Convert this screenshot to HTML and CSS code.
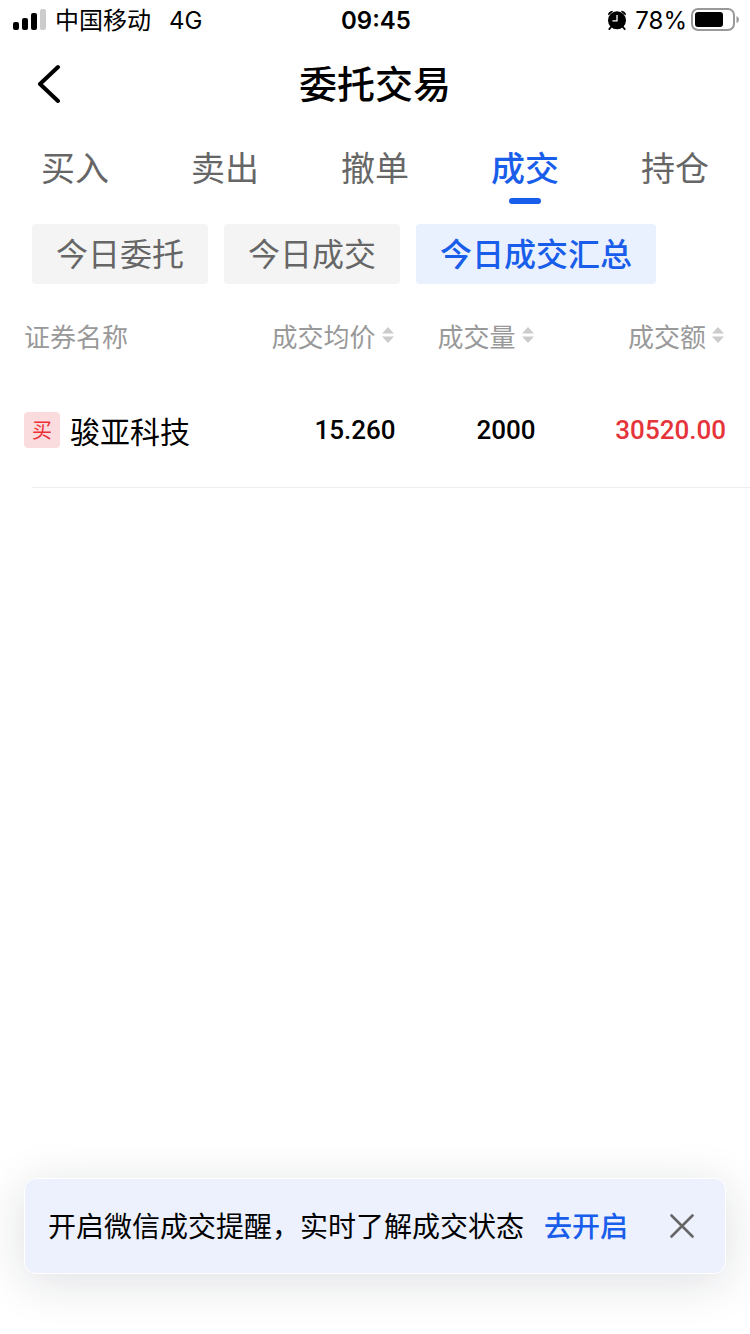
FILE: index.html
```html
<!DOCTYPE html>
<html lang="zh-CN">
<head>
  <meta charset="UTF-8">
  <meta name="viewport" content="width=device-width, initial-scale=1.0">
  <title>委托交易</title>
  <link rel="stylesheet" href="styles.css">
</head>
<body>

  <div class="status-bar">
    <div class="status-left">
      <svg class="signal" width="34" height="22" viewBox="0 0 34 22">
        <rect x="0" y="13" width="6" height="8" rx="2"/>
        <rect x="9" y="9" width="6" height="12" rx="2"/>
        <rect x="18" y="4" width="6" height="17" rx="2"/>
        <rect x="27" y="0" width="6" height="21" rx="2" fill="#ccc"/>
      </svg>
      <span class="carrier">中国移动</span>
      <span class="network">4G</span>
    </div>
    <div class="status-time">09:45</div>
    <div class="status-right">
      <svg class="alarm" width="20" height="20" viewBox="0 0 20 20">
        <circle cx="10" cy="10.3" r="9"/>
        <path d="M1 4.6 Q1.6 1.2 5.4 0.8 L6 1.6 L1.8 5.2 Z M19 4.6 Q18.4 1.2 14.6 0.8 L14 1.6 L18.2 5.2 Z"/>
        <path d="M4 17 L2.4 19M16 17 L17.6 19" fill="none" stroke="#000" stroke-width="2" stroke-linecap="round"/>
        <path d="M10 5 V10.8 H5.4" fill="none" stroke="#fff" stroke-width="1.3"/>
      </svg>
      <span>78%</span>
      <svg class="battery" width="48" height="24" viewBox="0 0 48 24">
        <rect x="1" y="1" width="42" height="21" rx="6" fill="none" stroke="#999" stroke-width="2"/>
        <rect x="4" y="4" width="28" height="15" rx="3"/>
        <path d="M45.5 8 Q48 9 48 11.5 Q48 14 45.5 15 Z" fill="#999"/>
      </svg>
    </div>
  </div>

  <header class="header">
    <button class="back" aria-label="返回">
      <svg width="24" height="40" viewBox="0 0 24 40">
        <path d="M22 3 L4 20 L22 37" fill="none" stroke="#000" stroke-width="4" stroke-linecap="round" stroke-linejoin="round"/>
      </svg>
    </button>
    <h1>委托交易</h1>
  </header>

  <nav class="tabs">
    <a href="#buy">买入</a>
    <a href="#sell">卖出</a>
    <a href="#cancel">撤单</a>
    <a href="#deal" class="active">成交</a>
    <a href="#hold">持仓</a>
  </nav>

  <div class="chips">
    <button>今日委托</button>
    <button>今日成交</button>
    <button class="active">今日成交汇总</button>
  </div>

  <table class="deals">
    <thead>
      <tr>
        <th class="name">证券名称</th>
        <th class="price"><button>成交均价<svg width="12" height="18" viewBox="0 0 12 18"><path d="M6 1 L12 7.5 H0 Z M0 10.5 H12 L6 17 Z"/></svg></button></th>
        <th class="volume"><button>成交量<svg width="12" height="18" viewBox="0 0 12 18"><path d="M6 1 L12 7.5 H0 Z M0 10.5 H12 L6 17 Z"/></svg></button></th>
        <th class="amount"><button>成交额<svg width="12" height="18" viewBox="0 0 12 18"><path d="M6 1 L12 7.5 H0 Z M0 10.5 H12 L6 17 Z"/></svg></button></th>
      </tr>
    </thead>
    <tbody>
      <tr>
        <td class="name"><div class="stock"><span class="badge">买</span>骏亚科技</div></td>
        <td>15.260</td>
        <td>2000</td>
        <td class="red">30520.00</td>
      </tr>
    </tbody>
  </table>
  <hr class="divider">

  <div class="notice">
    <p>开启微信成交提醒，实时了解成交状态</p>
    <a href="#open">去开启</a>
    <button class="close" aria-label="关闭">
      <svg width="24" height="24" viewBox="0 0 24 24">
        <path d="M1.5 1.5 L22.5 22.5 M22.5 1.5 L1.5 22.5" fill="none" stroke="#666" stroke-width="2.6" stroke-linecap="round"/>
      </svg>
    </button>
  </div>

</body>
</html>
```
FILE: styles.css
```css
* {
  box-sizing: border-box;
}
body {
  margin: 0;
  min-height: 100vh;
  display: flex;
  flex-direction: column;
  background: #fff;
  color: #000;
  font-family: "Noto Sans CJK SC", sans-serif;
}
button {
  border: none;
  padding: 0;
  background: none;
  color: inherit;
  font: inherit;
  cursor: pointer;
}
a {
  color: inherit;
  text-decoration: none;
}
svg {
  display: block;
  flex: none;
}

.status-bar {
  display: grid;
  grid-template-columns: 1fr auto 1fr;
  align-items: center;
  height: 40px;
  padding: 0 11px 0 13px;
  font-family: Inter, "Noto Sans CJK SC", sans-serif;
  font-size: 24px;
  line-height: 38px;
}
.status-bar span, .status-time {
  padding-top: 2px;
}
.status-left, .status-right {
  display: flex;
  align-items: center;
}
.status-right {
  justify-content: flex-end;
}
.carrier {
  margin-left: 8px;
}
.network {
  margin-left: 18px;
}
.status-time {
  font-weight: 600;
}
.alarm {
  margin-right: 8px;
}
.battery {
  margin-left: 4px;
}

.header {
  display: grid;
  grid-template-columns: 1fr auto 1fr;
  align-items: center;
  height: 88px;
  padding: 0 36px;
}
.header h1 {
  margin: 0;
  padding-bottom: 4px;
  font-size: 38px;
  font-weight: 500;
  line-height: 80px;
}
.back {
  justify-self: start;
}

.tabs {
  display: flex;
  height: 76px;
  color: #666;
  font-size: 34px;
  line-height: 78px;
}
.tabs a {
  flex: 1;
  position: relative;
  text-align: center;
}
.tabs .active {
  color: #195eeb;
  font-weight: 500;
}
.tabs .active::after {
  content: "";
  position: absolute;
  bottom: 0;
  left: 50%;
  width: 32px;
  height: 6px;
  margin-left: -16px;
  border-radius: 3px;
  background: #195eeb;
}

.chips {
  display: flex;
  gap: 16px;
  padding: 20px 32px 0;
}
.chips button {
  height: 60px;
  padding: 0 24px 4px;
  border-radius: 4px;
  background: #f4f4f4;
  color: #666;
  font-size: 32px;
  line-height: 56px;
}
.chips .active {
  background: #eaf1fe;
  color: #195eeb;
  font-weight: 500;
}

.deals {
  width: 100%;
  margin-top: 16px;
  border-collapse: collapse;
  table-layout: fixed;
}
.deals th, .deals td {
  padding: 0 2px 0 0;
  text-align: right;
}
.deals th {
  height: 72px;
  padding-bottom: 2px;
  color: #999;
  font-size: 26px;
  font-weight: 400;
}
.deals th button {
  display: inline-flex;
  align-items: center;
  gap: 6px;
  padding-right: 2px;
  fill: #ccc;
}
.deals td {
  height: 115px;
  font-family: Roboto, sans-serif;
  font-size: 26px;
  font-weight: 500;
}
.deals .name {
  width: 29%;
  padding-left: 24px;
  text-align: left;
}
.deals td.name {
  font-family: inherit;
  font-size: 30px;
  font-weight: 400;
}
.deals .price {
  width: 24%;
}
.deals .volume {
  width: 140px;
}
.deals th:last-child, .deals td:last-child {
  padding-right: 24px;
}
.deals .red {
  color: #e5343a;
}
.stock {
  display: flex;
  align-items: center;
  gap: 10px;
}
.badge {
  width: 36px;
  height: 36px;
  border-radius: 4px;
  background: #fadcdf;
  color: #ee3035;
  font-size: 20px;
  line-height: 36px;
  text-align: center;
}
.divider {
  width: auto;
  height: 1px;
  margin: 0 0 0 32px;
  border: none;
  background: #eee;
}

.notice {
  display: flex;
  align-items: center;
  height: 96px;
  margin: auto 24px 60px;
  padding: 0 31px 0 23px;
  border: 1px solid #fff;
  border-radius: 12px;
  background: #ecf1fd;
  box-shadow: 0 8px 48px rgba(20, 30, 50, 0.14);
  font-size: 28px;
}
.notice p {
  margin: 0 20px 0 0;
  padding-bottom: 2px;
}
.notice a {
  padding-bottom: 2px;
  color: #195eeb;
  font-weight: 500;
}
.close {
  margin-left: auto;
}
```
